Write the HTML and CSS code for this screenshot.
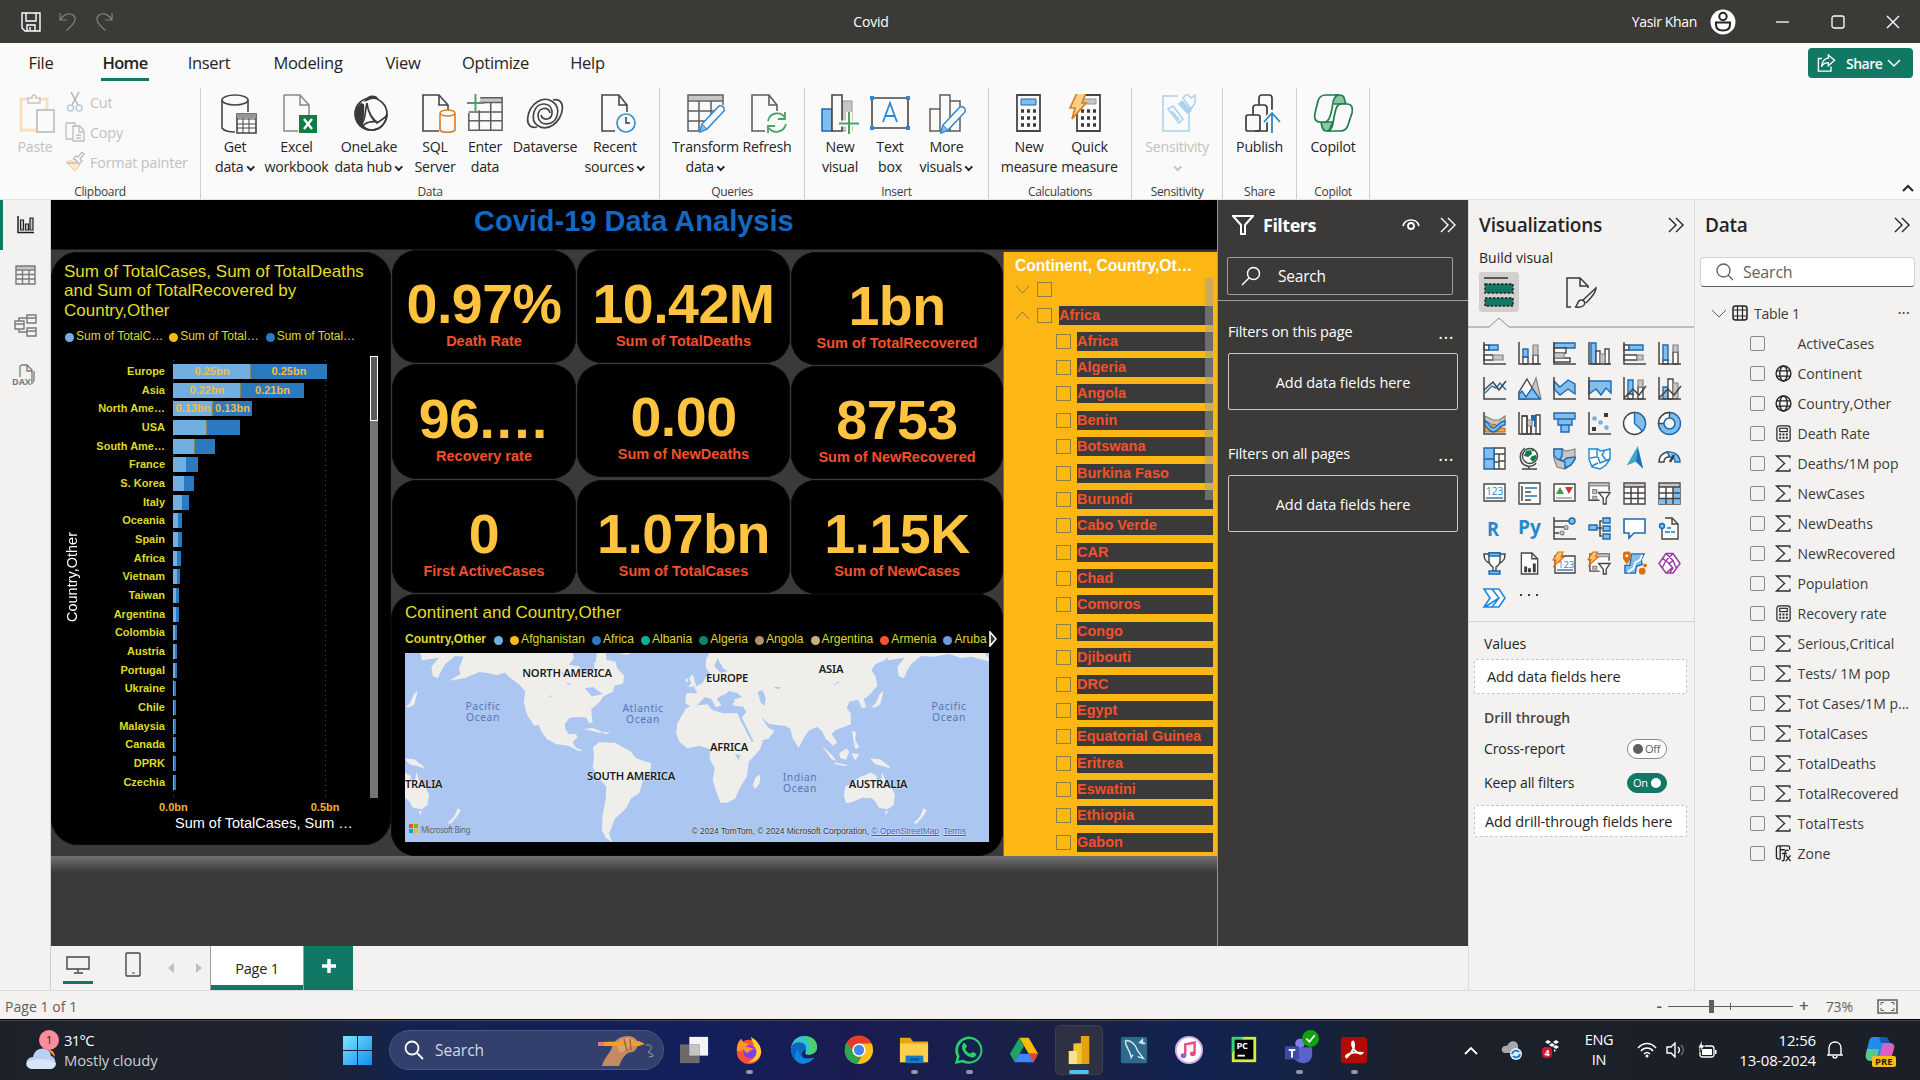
FILE: index.html
```html
<!DOCTYPE html>
<html lang="en">
<head>
<meta charset="utf-8">
<title>Covid</title>
<link rel="stylesheet" href="styles.css">
</head>
<body>
<svg class="defs" width="0" height="0">
  <symbol id="sigma" viewBox="0 0 16 16"><path d="M14 3V1H1.5L9 8 1.500 15H14V13" fill="none" stroke="#323130" stroke-width="1.3"/></symbol>
  <symbol id="globe" viewBox="0 0 16 16"><g fill="none" stroke="#252423" stroke-width="1.3"><circle cx="8" cy="8" r="7"/><ellipse cx="8" cy="8" rx="3.500" ry="7"/><path d="M1.500 5.500h13M1.500 10.500h13"/></g></symbol>
  <symbol id="calc" viewBox="0 0 16 18"><rect x="1" y="1" width="14" height="16" rx="2.500" fill="none" stroke="#252423" stroke-width="1.300"/><rect x="4" y="3.500" width="8" height="3.500" fill="none" stroke="#252423" stroke-width="1.200"/><path d="M3.500 10h2M7 10h2M10.500 10h2M3.500 13.500h2M7 13.500h2M10.500 13.500h2" stroke="#252423" stroke-width="2"/></symbol>
  <symbol id="chev2" viewBox="0 0 17 16"><path d="M1 1l7 7-7 7M8 1l7 7-7 7" fill="none" stroke="currentColor" stroke-width="1.400"/></symbol>
</svg>

<header class="titlebar">
  <div class="quick">
    <svg width="20" height="20" viewBox="0 0 20 20"><path d="M1 1h18v18H4l-3-3zM5 1v8h10V1M6 19v-6h8v6M9 15v3" fill="none" stroke="#fff" stroke-width="1.400"/></svg>
    <svg width="18" height="20" viewBox="0 0 18 20"><path d="M1 1v7h7M1.500 7.500C5 2 11 0 14.500 3.500 18 7 16 11 7.500 18.500" fill="none" stroke="#84827f" stroke-width="1.200"/></svg>
    <svg width="18" height="20" viewBox="0 0 18 20"><path d="M17 1v7h-7M16.500 7.500C13 2 7 0 3.500 3.500 0 7 2 11 10.500 18.500" fill="none" stroke="#84827f" stroke-width="1.200"/></svg>
  </div>
  <div class="doc-title">Covid</div>
  <div class="account"><span>Yasir Khan</span>
    <svg width="26" height="26" viewBox="0 0 26 26"><circle cx="13" cy="13" r="12.500" fill="#fff"/><circle cx="13" cy="7.500" r="3.700" fill="none" stroke="#252423" stroke-width="2"/><path d="M6 13.500h14v2c0 4-3 6-7 6s-7-2-7-6z" fill="none" stroke="#252423" stroke-width="2"/></svg>
    <svg width="14" height="14" viewBox="0 0 14 14"><path d="M0 7h13" stroke="#fff" stroke-width="1.300"/></svg>
    <svg width="14" height="14" viewBox="0 0 14 14"><rect x="1" y="1" width="12" height="12" rx="2" fill="none" stroke="#fff" stroke-width="1.300"/></svg>
    <svg width="14" height="14" viewBox="0 0 14 14"><path d="M1 1l12 12M13 1L1 13" stroke="#fff" stroke-width="1.400"/></svg>
  </div>
</header>

<nav class="tabs">
  <span class="t-file">File</span><span class="t-home active">Home</span><span class="t-insert">Insert</span><span class="t-model">Modeling</span><span class="t-view">View</span><span class="t-opt">Optimize</span><span class="t-help">Help</span>
  <button class="share"><svg width="20" height="20" viewBox="0 0 20 20"><path d="M5 5H1v14h14v-5M12 1l7 6-7 6v-3.500c-4 0-6 1.500-7.500 4.500C5 9 7 5 12 4.500z" fill="none" stroke="#fff" stroke-width="1.500"/></svg>Share<svg width="14" height="9" viewBox="0 0 14 9"><path d="M1 1l6 6 6-6" fill="none" stroke="#fff" stroke-width="1.500"/></svg></button>
</nav>

<section class="ribbon">
  <div class="group g-clip disabled">
    <div class="items">
      <div class="cmd w-paste i-in"><svg width="36" height="40" viewBox="0 0 36 40"><path d="M9 5H2v31h17V17h9V5h-7" fill="none" stroke="#f7dfbf" stroke-width="3"/><path d="M9 4h4c0-4 4-4 4 0h4v5H9z" fill="#fafafa" stroke="#c8c6c4" stroke-width="1.500"/><rect x="18" y="16" width="17" height="22" fill="#fafafa" stroke="#bdbbb9" stroke-width="1.600"/></svg><span>Paste</span></div>
      <div class="minor">
        <div><svg width="20" height="20" viewBox="0 0 20 20"><path d="M6 0l7 13M14 0L7 13" stroke="#b5b3b1" stroke-width="1.500"/><circle cx="5.500" cy="16" r="3" fill="none" stroke="#b3cfe2" stroke-width="1.500"/><circle cx="14" cy="16" r="3" fill="none" stroke="#b3cfe2" stroke-width="1.500"/></svg>Cut</div>
        <div><svg width="20" height="20" viewBox="0 0 20 20"><path d="M1 1h9v4M8 17H1V1M8 4h7l4 5v10H8zM14 4v6h5M11 13h5M11 16h5" fill="none" stroke="#c0bebc" stroke-width="1.300"/></svg>Copy</div>
        <div><svg width="20" height="20" viewBox="0 0 20 20"><path d="M1 10l8-3 6 6-5 6z" fill="#fbe9d2" stroke="#efcfa8"/><path d="M9 6l5 6 3-3-2-2 4-5-2-2-4 5-2-1zM12 11L2 11" fill="#fafafa" stroke="#c0bebc" stroke-width="1.300"/></svg>Format painter</div>
      </div>
    </div><div class="gname">Clipboard</div>
  </div>
  <div class="group g-data">
    <div class="items">
      <div class="cmd w60 i-far"><svg width="36" height="40" viewBox="0 0 36 40"><g fill="#fafafa" stroke="#484644" stroke-width="1.600"><path d="M1 6v28c2 3 7 4 13 4M27 6v12"/><ellipse cx="14" cy="6" rx="13" ry="5"/><path d="M16 20h19v19H16z"/><path d="M16 25h19M16 30h19M16 34h19M22 24v15M28 24v15" stroke-width="1"/></g><path d="M16 20h19v4H16z" fill="#979593"/></svg><span>Get<br>data<i class="dd"></i></span></div>
      <div class="cmd w63 i-far"><svg width="34" height="40" viewBox="0 0 34 40"><path d="M1 1h16l9 10v11M15 37H1V1M17 1v10h9" fill="none" stroke="#8a8886" stroke-width="1.500"/><rect x="16" y="21" width="18" height="18" fill="#107c41"/><path d="M21 25l8 10M29 25l-8 10" stroke="#fff" stroke-width="2.400"/></svg><span>Excel<br>workbook</span></div>
      <div class="cmd w82 i-in"><svg width="36" height="40" viewBox="0 0 36 40"><circle cx="18" cy="20" r="16" fill="#fafafa" stroke="#3b3a39" stroke-width="1.700"/><path d="M14 9c1 8 4 16 10 20 4-3 9-5 10-9-1 9-6 16-15 16-5 0-9-3-10-6 4-6 3-14 5-21zM14 11c2 9 5 14 11 18M24 28c-5-1-12 0-15 5" fill="none" stroke="#3b3a39" stroke-width="1.600"/><path d="M11 8c2-7 11-9 15-3-4-1-9 0-15 3zM8 9C0 14 0 28 9 34c1-5 3-16 2-24z" fill="#3b3a39"/></svg><span>OneLake<br>data hub<i class="dd"></i></span></div>
      <div class="cmd w50 i-far"><svg width="36" height="40" viewBox="0 0 36 40"><path d="M18 37H2V1h16l9 10v5M18 1v10h9" fill="none" stroke="#484644" stroke-width="1.600"/><path d="M19 20v16c2 3 13 3 15 0V20" fill="#fafafa" stroke="#d67f29" stroke-width="1.600"/><ellipse cx="26.500" cy="19" rx="7.500" ry="3" fill="#fafafa" stroke="#d67f29" stroke-width="1.600"/></svg><span>SQL<br>Server</span></div>
      <div class="cmd w50"><svg width="38" height="42" viewBox="0 0 38 42"><path d="M14 4h23v5H14z" fill="#c8c6c4"/><path d="M14 4h23v34H2V20M13 9h24M2 19h35M2 28h35M13 17v21M25 9v29" fill="none" stroke="#605e5c" stroke-width="1.600"/><path d="M9 0v18M0 9.500h18" stroke="#4ca064" stroke-width="2"/></svg><span>Enter<br>data</span></div>
      <div class="cmd w70"><svg width="38" height="40" viewBox="0 0 38 40"><g fill="none" stroke="#484644" stroke-width="1.700"><path d="M11 33C-3 36 0 15 11 8c10-7 24 1 20 14-3 10-18 11-19 0 0-9 11-10 12-3"/><path d="M27 6c14-3 11 18 0 25C17 38 4 31 8 18 11 8 24 7 26 17c1 10-10 10-11 4"/></g></svg><span>Dataverse</span></div>
      <div class="cmd w70 i-in"><svg width="38" height="40" viewBox="0 0 38 40"><path d="M17 37H4V1h17l8 10v7M21 1v10h8" fill="none" stroke="#484644" stroke-width="1.600"/><circle cx="28" cy="29" r="9" fill="#fafafa" stroke="#3b8fcb" stroke-width="1.700"/><path d="M28 23v6h4" fill="none" stroke="#3b3a39" stroke-width="1.500"/></svg><span>Recent<br>sources<i class="dd"></i></span></div>
    </div><div class="gname">Data</div>
  </div>
  <div class="group g-query">
    <div class="items">
      <div class="cmd w71"><svg width="38" height="40" viewBox="0 0 38 40"><path d="M1 1h35v5H1z" fill="#c8c6c4"/><path d="M12 37H1V1h35v10M1 7h35M1 17h26M1 27h18M12 7v30M24 7v14" fill="none" stroke="#605e5c" stroke-width="1.500"/><path d="M13 38l2-8 17-18c3-1 6 1 5 5L20 35z" fill="#fafafa" stroke="#2b88d8" stroke-width="1.500"/><path d="M13 38l2-8 5 5z" fill="#83bdeb" stroke="#2b88d8"/></svg><span>Transform<br>data<i class="dd"></i></span></div>
      <div class="cmd w52 i-in"><svg width="36" height="40" viewBox="0 0 36 40"><path d="M14 37H1V1h17l8 10v6M18 1v10h8" fill="none" stroke="#605e5c" stroke-width="1.600"/><path d="M17 27c2-9 13-10 17-3M34 18v7h-7M35 30c-2 9-13 10-17 4M17 39v-7h7" fill="none" stroke="#4ca064" stroke-width="1.800"/></svg><span>Refresh</span></div>
    </div><div class="gname">Queries</div>
  </div>
  <div class="group g-insert">
    <div class="items">
      <div class="cmd w50"><svg width="38" height="40" viewBox="0 0 38 40"><path d="M21 7h10v30H21z" fill="#c8c6c4" stroke="#979593"/><path d="M1 15h10v22H1z" fill="#83bdeb" stroke="#1b6ab3" stroke-width="1.500"/><path d="M11 1h10v36H11z" fill="#fafafa" stroke="#484644" stroke-width="1.600"/><path d="M28 18v22M18 29.500h20" stroke="#fafafa" stroke-width="6"/><path d="M28 18v22M18 29.500h20" stroke="#4ca064" stroke-width="2"/></svg><span>New<br>visual</span></div>
      <div class="cmd w50"><svg width="40" height="40" viewBox="0 0 40 40"><path d="M2 4h36v30H2z" fill="#fafafa" stroke="#484644" stroke-width="1.600"/><path d="M13 28l7-19 7 19M15.500 22h9" fill="none" stroke="#2b88d8" stroke-width="1.800"/><path d="M0 2h4v4H0zM36 2h4v4h-4zM0 32h4v4H0zM36 32h4v4h-4z" fill="#2b88d8"/></svg><span>Text<br>box</span></div>
      <div class="cmd w63 i-in"><svg width="38" height="40" viewBox="0 0 38 40"><path d="M1 15h10v22H1zM11 1h10v36H11zM21 7h10v30H21z" fill="#fafafa" stroke="#605e5c" stroke-width="1.500"/><path d="M12 39l2-8 17-18c3-1 6 1 5 5L19 36z" fill="#fafafa" stroke="#2b88d8" stroke-width="1.500"/><path d="M12 39l2-8 5 5z" fill="#83bdeb" stroke="#2b88d8"/></svg><span>More<br>visuals<i class="dd"></i></span></div>
    </div><div class="gname">Insert</div>
  </div>
  <div class="group g-calc">
    <div class="items">
      <div class="cmd w59"><svg width="26" height="40" viewBox="0 0 26 40"><path d="M1 1h23v36H1z" fill="#fafafa" stroke="#484644" stroke-width="1.800"/><path d="M5 5h15v6H5z" fill="#83bdeb" stroke="#1b6ab3"/><path d="M5 17h3M11 17h3M17 17h3M5 24h3M11 24h3M17 24h3M5 31h3M11 31h3M17 31h3" stroke="#3b3a39" stroke-width="3.500"/></svg><span>New<br>measure</span></div>
      <div class="cmd w61 i-back"><svg width="34" height="40" viewBox="0 0 34 40"><path d="M8 1h23v36H8z" fill="#fafafa" stroke="#484644" stroke-width="1.800"/><path d="M14 5h13v5H14z" fill="#c8c6c4" stroke="#979593"/><path d="M12 17h3M18 17h3M24 17h3M12 24h3M18 24h3M24 24h3M12 31h3M18 31h3M24 31h3" stroke="#3b3a39" stroke-width="3.500"/><path d="M8-1h9l-4 10h4L3 25l3-11H1z" fill="#fcd083" stroke="#d67f29" stroke-width="1.700"/></svg><span>Quick<br>measure</span></div>
    </div><div class="gname">Calculations</div>
  </div>
  <div class="group g-sens disabled">
    <div class="items"><div class="cmd w70 i-in"><svg width="36" height="40" viewBox="0 0 36 40"><path d="M17 2H2v35h26V18" fill="none" stroke="#a9d2ec" stroke-width="1.500"/><path d="M7 15l5-3 10 13-4 4zM11 17l7 9" fill="none" stroke="#a9d2ec" stroke-width="1.500"/><path d="M17 10l4-4 10 11-5 3z" fill="#a9d2ec"/><path d="M22 4l4-4 4 4 4-3v8l-4 6z" fill="#fafafa" stroke="#a9d2ec" stroke-width="1.500"/></svg><span>Sensitivity<br><i class="dd"></i></span></div></div>
    <div class="gname">Sensitivity</div>
  </div>
  <div class="group g-share">
    <div class="items"><div class="cmd w60 i-far"><svg width="36" height="40" viewBox="0 0 36 40"><g fill="none" stroke="#3b3a39" stroke-width="1.700"><rect x="1" y="21" width="14" height="16" rx="2"/><path d="M8 21v-7c0-2 1-3 3-3h8c2 0 3 1 3 3v23H10M14 11V4c0-2 1-3 3-3h7c2 0 3 1 3 3v14"/></g><path d="M27 39V20M20 27l7-8 7 8" fill="none" stroke="#fafafa" stroke-width="5"/><path d="M27 39V20M19 28l8-9 8 9" fill="none" stroke="#2f86c1" stroke-width="1.800"/></svg><span>Publish</span></div></div>
    <div class="gname">Share</div>
  </div>
  <div class="group g-copilot">
    <div class="items"><div class="cmd w60"><svg width="40" height="40" viewBox="0 0 40 40"><g stroke="#1d7d4c" stroke-width="1.700" stroke-linejoin="round"><path d="M22 1h5c5 0 4 5 6 9H21M8 28h12l-4 9h-3c-4 0-4-5-5-9" fill="#8cc4a3"/><path d="M13 1h12c-5 2-5 8-6 14-2 8-3 13-8 13H7c-5 0-6-4-5-9l3-12c1-4 4-6 8-6z" fill="#fafafa"/><path d="M27 37H15c5-2 5-8 6-14 2-8 2-13 8-13h5c5 0 6 4 5 9l-4 12c-1 4-4 6-8 6z" fill="#fafafa"/></g></svg><span>Copilot</span></div></div>
    <div class="gname">Copilot</div>
  </div>
  <svg class="collapse" width="12" height="8" viewBox="0 0 12 8"><path d="M1 7l5-5 5 5" fill="none" stroke="#252423" stroke-width="2"/></svg>
</section>

<main class="workspace">
  <aside class="views">
    <div class="view on"><svg width="17" height="18" viewBox="0 0 17 18"><path d="M1 0v16.500h16" fill="none" stroke="#201f1e" stroke-width="1.500"/><path d="M3.500 4h3v10h-3zM8.500 8h3v6h-3zM13 2h3v12h-3z" fill="#c8c6c4" stroke="#201f1e" stroke-width="1.200"/></svg></div>
    <div class="view"><svg width="21" height="20" viewBox="0 0 21 20"><path d="M1 1h19v3H1z" fill="#c8c6c4"/><path d="M1 1h19v18H1zM1 5h19M1 9.500h19M1 14h19M7.500 5v14M14 5v14" fill="none" stroke="#7b7977" stroke-width="1.400"/></svg></div>
    <div class="view"><svg width="23" height="23" viewBox="0 0 23 23"><path d="M13 1h9v8h-9zM13 14h9v8h-9zM1 7h9v8H1zM13 4h9M13 17h9M1 10h9M5 7V4h8M5 15v3h8" fill="none" stroke="#7b7977" stroke-width="1.400"/></svg></div>
    <div class="view dax"><svg width="22" height="22" viewBox="0 0 22 22"><path d="M6 13V3c0-1 1-2 2-2h5l5 5v10c0 1-1 2-2 2M13 1v6h5M20 7v8c0 3-2 5-4 5" fill="none" stroke="#7b7977" stroke-width="1.300"/></svg><b>DAX</b></div>
  </aside>

  <div class="center">
    <div class="stage">
      <div class="report">
        <h1>Covid-19 Data Analysis</h1>
        <div class="board">
          <section class="card chart">
            <h2>Sum of TotalCases, Sum of TotalDeaths<br>and Sum of TotalRecovered by<br>Country,Other</h2>
            <div class="legend"><i class="c1"></i><span>Sum of TotalC…</span><i class="c2"></i><span>Sum of Total…</span><i class="c3"></i><span>Sum of Total…</span></div>
            <div class="plot">
              <div class="ytitle">Country,Other</div>
              <div class="rows">
                <div class="row"><span>Europe</span><b style="width:78px">0.25bn</b><b style="width:76px">0.25bn</b></div>
                <div class="row"><span>Asia</span><b style="width:68px">0.22bn</b><b style="width:63px">0.21bn</b></div>
                <div class="row"><span>North Ame…</span><b style="width:40px">0.13bn</b><b style="width:39px">0.13bn</b></div>
                <div class="row"><span>USA</span><b style="width:34px"></b><b style="width:33px"></b></div>
                <div class="row"><span>South Ame…</span><b style="width:22px"></b><b style="width:20px"></b></div>
                <div class="row"><span>France</span><b style="width:13px"></b><b style="width:12px"></b></div>
                <div class="row"><span>S. Korea</span><b style="width:11px"></b><b style="width:10px"></b></div>
                <div class="row"><span>Italy</span><b style="width:9px"></b><b style="width:7px"></b></div>
                <div class="row"><span>Oceania</span><b style="width:5px"></b><b style="width:4px"></b></div>
                <div class="row"><span>Spain</span><b style="width:5px"></b><b style="width:4px"></b></div>
                <div class="row"><span>Africa</span><b style="width:4px"></b><b style="width:4px"></b></div>
                <div class="row"><span>Vietnam</span><b style="width:4px"></b><b style="width:3px"></b></div>
                <div class="row"><span>Taiwan</span><b style="width:3px"></b><b style="width:3px"></b></div>
                <div class="row"><span>Argentina</span><b style="width:3px"></b><b style="width:3px"></b></div>
                <div class="row"><span>Colombia</span><b style="width:2px"></b><b style="width:2px"></b></div>
                <div class="row"><span>Austria</span><b style="width:2px"></b><b style="width:2px"></b></div>
                <div class="row"><span>Portugal</span><b style="width:2px"></b><b style="width:2px"></b></div>
                <div class="row"><span>Ukraine</span><b style="width:1px"></b><b style="width:2px"></b></div>
                <div class="row"><span>Chile</span><b style="width:1px"></b><b style="width:2px"></b></div>
                <div class="row"><span>Malaysia</span><b style="width:1px"></b><b style="width:2px"></b></div>
                <div class="row"><span>Canada</span><b style="width:1px"></b><b style="width:2px"></b></div>
                <div class="row"><span>DPRK</span><b style="width:1px"></b><b style="width:2px"></b></div>
                <div class="row"><span>Czechia</span><b style="width:1px"></b><b style="width:2px"></b></div>
              </div>
              <div class="scroll"><i></i></div>
            </div>
            <div class="ticks"><span>0.0bn</span><span>0.5bn</span></div>
            <div class="xtitle">Sum of TotalCases, Sum …</div>
          </section>

          <div class="middle">
            <div class="kpis">
              <div class="kcol k1">
                <div class="card kpi"><strong>0.97%</strong><span>Death Rate</span></div>
                <div class="card kpi tall"><strong>96.…</strong><span>Recovery rate</span></div>
                <div class="card kpi"><strong>0</strong><span>First ActiveCases</span></div>
              </div>
              <div class="kcol k2">
                <div class="card kpi"><strong>10.42M</strong><span>Sum of TotalDeaths</span></div>
                <div class="card kpi mid"><strong>0.00</strong><span>Sum of NewDeaths</span></div>
                <div class="card kpi"><strong>1.07bn</strong><span>Sum of TotalCases</span></div>
              </div>
              <div class="kcol k3">
                <div class="card kpi"><strong>1bn</strong><span>Sum of TotalRecovered</span></div>
                <div class="card kpi"><strong>8753</strong><span>Sum of NewRecovered</span></div>
                <div class="card kpi"><strong>1.15K</strong><span>Sum of NewCases</span></div>
              </div>
            </div>
            <section class="card mapcard">
              <h2>Continent and Country,Other</h2>
              <div class="legend mlegend"><strong>Country,Other</strong><i class="c1"></i><i class="c2"></i><span>Afghanistan</span><i class="c3"></i><span>Africa</span><i class="c4"></i><span>Albania</span><i class="c5"></i><span>Algeria</span><i class="c6"></i><span>Angola</span><i class="c7"></i><span>Argentina</span><i class="c8"></i><span>Armenia</span><i class="c9"></i><span>Aruba</span><svg width="8" height="16" viewBox="0 0 8 16"><path d="M1 1v14l6-7z" fill="#333" stroke="#fff" stroke-width="1.600"/></svg></div>
              <div class="map">
                <svg width="584" height="189" viewBox="37 219 1454 567" preserveAspectRatio="none">
                  <g fill="#efeeea">
                    <g id="east">
                      <path d="M1290 219h190l17 26-30-8-20-7-25 4-30-12-40 8-30-2-25 25-10 20-8 22-13-7-3-28 17-25zM1235 219h60l-15 14-40 8z"/>
                      <path d="M1133 620l17-10 20-20 15-5 10-8 17 11-2 10 12 8 3-31 8 28 14 17 10 25-4 30-14 13-22-5-10-20-8-8-24-2-22 12-18 5-5-24z"/>
                      <path d="M1195 535l25 3 22 20 4 8-20-8-18-5zM1232 694l8-2-6 14z"/><path d="M1198 382l12-14 8-24 10-12-2 14-6 28-12 8zM1328 685l8 6-8 16-17 24-8-2 17-20z"/>
                    </g>
                    <use href="#east" x="-1160"/>
                    <path d="M185 222l25-3h285l-10 14-25-3-15 24 26 5 6 20 18 6 14-20-4-46h32l2 20 22 6 4 20 18 22-3 24-22 6-3 18-24 14-10 18-20 20 1 22 2 18-8 4-7-18-18-2-24 2-12 18 2 18 8 14 18-2 3 12-9 10-2 8 10 14 14 6-8 3-26-16-32-6-22-14-12-18-10-26-10 4-18-34-8-36 3-34-14-20-22-20-15-16-20 8-18-6-25-4-35 18-40 8 28-20-4-16z"/>
                    <path d="M480 447l24-3 26 12-10 2-26-8zM525 456l24 1-12 6zM572 219l18 6 8-6z"/>
                    <path d="M505 502l15-15 40 1 20 14 20 13 12 20 38 15-2 20-18 30-10 40-20 15-10 25-15 20-15 15-8 25-7 22 8 24-16-12-10-24 2-45 8-52 1-33-23-34-11-26 4-28z"/>
                    <path d="M737 385l13-7 40-5 12 17 28 10 35 0 8 24 17 36 10 25 28-2-8 27-27 35-5 45-18 35-10 30-20 13h-18l-14-48-5-20 5-35-13-30 2-27-27-10-30 7-20-20-8-25 3-30zM910 592l12-9-2 27-12 18-5-14z"/>
                    <path d="M735 370l2-30h28l-8-18 20-12 10-20 10-8-12-20 2-25 8-18h450l-12 20-25 14-10 18 10 16 5 30-20 28-14 12 6 24-10 4-10-26-22 6-6 18 10 18 0 32-38 18-10 10 14 26-10 10-18-20-10-24-12-12-20 10-14 25-12 28-15-30-6-28-12-8-40-6-20-20 18 32 15 8-15 24-35 12-15-32-20-38 15-22-8-16-28-4 8-14-16-14-14-4-16 12 12 20-14 6-12-26-16-4-14 18-14 16z"/>
                    <path d="M742 321l20-2-8-36-10 12 6 14zM733 300l8-5v13zM1075 498l26 28 10 18-12-6zM1106 547l30 7v5l-28-6zM1118 520l18-15 7 10-8 24-14-4zM1150 452l10 4-2 24 10 22-10 4-5-28zM1148 520l20 2-10 20z"/>
                  </g>
                  <g fill="#abc6f0"><path d="M832 345l12-12 20 6 12 12-24 8zM915 335l12-4 8 22-2 24-10-8zM485 325l20-4 25 22-28 6zM815 235l-8 24 16 20 18-6-12-8zM858 522l15 4-6 14zM865 400l8 6 26 64-8-4zM955 322l18-2-6 8zM1102 318l14-14 3 3zM425 272l14 18-9-3zM440 305l14 12-12-4zM455 219l60 0-4 30-24-2-30-14zM397 345l6 4-6 4z"/></g>
                </svg>
                <b class="pin p1">NORTH AMERICA</b><b class="pin p2">EUROPE</b><b class="pin p3">ASIA</b><b class="pin p4">AFRICA</b><b class="pin p5">SOUTH AMERICA</b><b class="pin p6">AUSTRALIA</b><b class="pin p7">TRALIA</b>
                <span class="pin o1">Pacific<br>Ocean</span><span class="pin o2">Atlantic<br>Ocean</span><span class="pin o3">Pacific<br>Ocean</span><span class="pin o4">Indian<br>Ocean</span>
                <span class="pin bing"><svg width="9" height="9" viewBox="0 0 9 9"><path d="M0 0h4v4H0z" fill="#f25022"/><path d="M5 0h4v4H5z" fill="#7fba00"/><path d="M0 5h4v4H0z" fill="#00a4ef"/><path d="M5 5h4v4H5z" fill="#ffb900"/></svg>Microsoft Bing</span>
                <span class="pin credit">© 2024 TomTom, © 2024 Microsoft Corporation, <u>© OpenStreetMap</u> <u>Terms</u></span>
              </div>
            </section>
          </div>

          <section class="slicer">
            <h3>Continent, Country,Ot…</h3>
            <div class="srow top"><svg width="15" height="9" viewBox="0 0 15 9"><path d="M1 1l6.500 7L14 1" fill="none" stroke="#8a7a45"/></svg><i></i></div>
            <div class="srow top second"><svg width="15" height="9" viewBox="0 0 15 9"><path d="M1 8l6.500-7L14 8" fill="none" stroke="#8a7a45"/></svg><i></i><span>Africa</span></div>
            <div class="kids">
              <div class="srow"><i></i><span>Africa</span></div>
              <div class="srow"><i></i><span>Algeria</span></div>
              <div class="srow"><i></i><span>Angola</span></div>
              <div class="srow"><i></i><span>Benin</span></div>
              <div class="srow"><i></i><span>Botswana</span></div>
              <div class="srow"><i></i><span>Burkina Faso</span></div>
              <div class="srow"><i></i><span>Burundi</span></div>
              <div class="srow"><i></i><span>Cabo Verde</span></div>
              <div class="srow"><i></i><span>CAR</span></div>
              <div class="srow"><i></i><span>Chad</span></div>
              <div class="srow"><i></i><span>Comoros</span></div>
              <div class="srow"><i></i><span>Congo</span></div>
              <div class="srow"><i></i><span>Djibouti</span></div>
              <div class="srow"><i></i><span>DRC</span></div>
              <div class="srow"><i></i><span>Egypt</span></div>
              <div class="srow"><i></i><span>Equatorial Guinea</span></div>
              <div class="srow"><i></i><span>Eritrea</span></div>
              <div class="srow"><i></i><span>Eswatini</span></div>
              <div class="srow"><i></i><span>Ethiopia</span></div>
              <div class="srow"><i></i><span>Gabon</span></div>
            </div>
            <div class="sthumb"></div>
          </section>
        </div>
        <div class="shade"></div>
      </div>

      <aside class="filters">
        <div class="fhead"><svg width="22" height="20" viewBox="0 0 22 20"><path d="M1 1h20l-8 9v9H9v-9z" fill="none" stroke="#fff" stroke-width="2"/></svg><b>Filters</b>
          <svg class="eye" width="18" height="14" viewBox="0 0 18 14"><path d="M1 8C3 0 15 0 17 8" fill="none" stroke="#fff" stroke-width="1.700"/><circle cx="9" cy="8" r="3" fill="none" stroke="#fff" stroke-width="1.800"/></svg>
          <svg width="17" height="16"><use href="#chev2"/></svg></div>
        <div class="fsearch"><svg width="20" height="20" viewBox="0 0 20 20"><circle cx="12.500" cy="7.500" r="6" fill="none" stroke="#fff" stroke-width="1.500"/><path d="M8 12l-7 7" stroke="#fff" stroke-width="1.500"/></svg>Search</div>
        <div class="fline"></div>
        <div class="fsec"><span>Filters on this page</span><em>...</em></div>
        <div class="fdrop">Add data fields here</div>
        <div class="fsec two"><span>Filters on all pages</span><em>...</em></div>
        <div class="fdrop">Add data fields here</div>
      </aside>
    </div>
    <div class="pagebar">
      <div class="device on"><svg width="24" height="18" viewBox="0 0 24 18"><path d="M1 1h22v12H1zM12 13v3M8 17h9" fill="none" stroke="#484644" stroke-width="1.400"/></svg></div>
      <div class="device phone"><svg width="16" height="25" viewBox="0 0 16 25"><rect x="1" y="1" width="14" height="23" rx="1" fill="none" stroke="#484644" stroke-width="1.400"/><path d="M7 21h3" stroke="#484644"/></svg></div>
      <svg class="arr" width="6" height="10" viewBox="0 0 6 10"><path d="M6 0v10L0 5z" fill="#c0bebc"/></svg>
      <svg class="arr" width="6" height="10" viewBox="0 0 6 10"><path d="M0 0v10l6-5z" fill="#c0bebc"/></svg>
      <div class="page">Page 1</div>
      <div class="plus"><svg width="14" height="14" viewBox="0 0 14 14"><path d="M7 0v14M0 7h14" stroke="#fff" stroke-width="3.500"/></svg></div>
    </div>
  </div>

  <aside class="panel viz">
    <div class="phead"><b>Visualizations</b><svg width="17" height="16"><use href="#chev2"/></svg></div>
    <div class="build">Build visual</div>
    <div class="modes">
      <div class="mode on"><svg width="30" height="30" viewBox="0 0 30 30"><path d="M0 1h24" stroke="#252423" stroke-width="1.400"/><path d="M1 7h28v9H1zM1 21h28v8H1z" fill="#117865" stroke="#252423" stroke-width="1.400" stroke-dasharray="2.500 1.500"/></svg></div>
      <div class="mode"><svg width="31" height="31" viewBox="0 0 31 31"><path d="M5 30H1V1h13l8 8v2M14 1v8h8" fill="none" stroke="#3b3a39" stroke-width="1.500"/><path d="M9 30c3-1 2-7 6-7 4 0 5 4 2 6s-5 1-8 1zM17 23L30 11c0 4-6 11-10 15" fill="none" stroke="#3b3a39" stroke-width="1.500"/></svg></div>
    </div>
    <svg class="notch" width="226" height="11" viewBox="0 0 226 11"><path d="M0 10h21l10-9 10 9h185" fill="none" stroke="#8a8886"/></svg>
    <div class="vgrid">
      <svg viewBox="0 0 23 23"><path class="w" d="M1 3h5v5H1zM1 13h9v5H1z"/><path class="b" d="M6 3h9v5H6z"/><path class="g" d="M10 13h10v5H10z"/><path class="a" d="M1 0v22h22"/></svg>
      <svg viewBox="0 0 23 23"><path class="w" d="M5 15h5v7H5zM15 13h5v9h-5z"/><path class="b" d="M5 7h5v8H5z"/><path class="g" d="M15 3h5v10h-5z"/><path class="a" d="M1 0v22h22"/></svg>
      <svg viewBox="0 0 23 23"><path class="b" d="M1 1h21v5H1z"/><path class="w" d="M1 6h12v5H1zM1 16h16v4H1z"/><path class="g" d="M1 11h10v5H1z"/><path class="a" d="M1 0v22h22"/></svg>
      <svg viewBox="0 0 23 23"><path class="b" d="M3 1h5v21H3z"/><path class="w" d="M8 9h4v13H8zM17 7h4v15h-4z"/><path class="g" d="M12 12h5v10h-5z"/><path class="a" d="M1 0v22h22"/></svg>
      <svg viewBox="0 0 23 23"><path class="w" d="M1 3h5v5H1zM1 13h13v5H1z"/><path class="b" d="M6 3h14v5H6z"/><path class="g" d="M14 13h6v5h-6z"/><path class="a" d="M1 0v22h22"/></svg>
      <svg viewBox="0 0 23 23"><path class="w" d="M5 18h5v4H5zM15 10h5v12h-5z"/><path class="b" d="M5 3h5v15H5z"/><path class="g" d="M15 3h5v7h-5z"/><path class="a" d="M1 0v22h22"/></svg>

      <svg viewBox="0 0 23 23"><path class="bl" d="M2 16l7-7 4 2 4-5 6 7"/><path class="a" d="M1 13l9-8 6 8 7-9"/><path class="a" d="M1 0v22h22"/></svg>
      <svg viewBox="0 0 23 23"><path class="g" d="M9 22l9-21 5 21z"/><path class="w" d="M1 15L9 2l8 14-8 6H1z"/><path class="b" d="M1 22v-5l3-3 4 6 6-9 8 11z"/></svg>
      <svg viewBox="0 0 23 23"><path class="b" d="M1 4l6 6 8-7 7 4v10l-7-5-8 6-6-6z"/><path class="a" d="M1 0v22h22"/></svg>
      <svg viewBox="0 0 23 23"><path class="b" d="M1 4h22v12l-5-5-5 7-5-6-7 5z"/><path class="a" d="M1 0v22h22"/></svg>
      <svg viewBox="0 0 23 23"><path class="b" d="M5 3h5v15H5z"/><path class="w" d="M5 17h5v5H5zM15 10h5v12h-5z"/><path class="g" d="M15 3h5v7h-5z"/><path class="a" d="M1 21l9-9 6 6 7-9M1 0v22h22"/></svg>
      <svg viewBox="0 0 23 23"><path class="b" d="M5 10h5v12H5z"/><path class="w" d="M10 2h5v20h-5z"/><path class="g" d="M15 6h5v16h-5z"/><path class="a" d="M1 21l9-9 6 6 7-9M1 0v22h22"/></svg>

      <svg viewBox="0 0 23 23"><path class="g" d="M2 4l8 4 6 0 6-4v6l-7 4-7-2-6-3z"/><path fill="#f2a33a" stroke="#c2610c" d="M2 14h6l4-2 4 4h6v4H2z"/><path class="b" d="M2 9c4 0 4 7 8 7s6-7 12-7v4c-6 0-6 7-12 7-4 0-5-5-8-6z"/><path class="a" d="M1 0v22h22"/></svg>
      <svg viewBox="0 0 23 23"><path class="w" d="M4 4h5v18H4zM9 10h4v12H9zM18 3h4v19h-4z"/><path fill="#1b6ab3" d="M13 3h5v12h-2V9h-3z"/><path class="g" d="M9 8h5v6H9z"/><path class="a" d="M1 0v22h22M4 4h5v18M13 14v8"/></svg>
      <svg viewBox="0 0 23 23"><path class="b" d="M1 1h21v6H1zM5 7h14v6H5zM8 13h8v7H8z"/></svg>
      <svg viewBox="0 0 23 23"><path fill="#83bdeb" stroke="#5fa5dc" d="M5 5h3v3H5zM11 9h3v3h-3zM17 14h3v3h-3z"/><path fill="#3b3a39" d="M16 1h4v4h-4zM4 15h4v4H4z"/><path class="a" d="M1 0v22h22"/></svg>
      <svg viewBox="0 0 23 23"><circle class="w" cx="11.500" cy="11.500" r="11"/><path class="b" d="M11.500.5a11 11 0 0 1 8 18.500l-8-7.500z"/></svg>
      <svg viewBox="0 0 23 23"><circle class="b" cx="11.500" cy="11.500" r="11"/><path class="w" d="M11.500.500A11 11 0 0 0 .500 11.500H6l5.500-6z"/><circle cx="11.500" cy="11.500" r="5.500" fill="#f3f2f1" stroke="#1b6ab3" stroke-width="1.500"/></svg>

      <svg viewBox="0 0 23 23"><path class="w" d="M11 1h11v21H11zM11 7h11M16 7v15M16 14h6M11 15h5"/><path class="b" d="M1 1h10v21H1zM1 12h10"/></svg>
      <svg viewBox="0 0 23 23"><path class="a" d="M7 1C0 6 1 17 9 19c4 1 8-1 9-3M11 19v3M4 22h15"/><circle class="w" cx="12" cy="9" r="7.500"/><path fill="#107c41" d="M8 4l5-1 1 4-4 3-4-1zM14 9l4-1 1 3-4 4-3-3zM12 1l4 2-1 2z"/></svg>
      <svg viewBox="0 0 23 23"><path class="g" d="M1 2h9l2 2 6-1 4-1v10l-4 6-6 4-8-2-3-8z"/><path class="b" d="M1 2h8v7l-2 3 3 2 4-3 8-1v2l-4 6-6 3 0-6-8-3-3-3z"/></svg>
      <svg viewBox="0 0 23 23"><path fill="#fff" stroke="#1b88d8" stroke-width="1.400" d="M1 2h9l2 2 6-1 4-1v10l-4 6-6 4-8-2-3-8zM9 2v8l-7 1M10 10l2 6 10-4M4 19l6-3M17 3l-3 5 4 5"/></svg>
      <svg viewBox="0 0 23 25"><path d="M15-1L3 20l10-4z" fill="#41a5c9"/><path d="M15-1l6 25-8-8z" fill="#1673b8"/></svg>
      <svg viewBox="0 0 23 23"><path class="w" d="M1 15C1 9 5 5 11 5v5c-3 0-5 2-5 5z"/><path class="b" d="M9 5c8-1 13 4 13 10h-5c0-3-2-5-5-5z"/><path d="M12 15l4-7" stroke="#3b3a39" stroke-width="2.500"/></svg>

      <svg viewBox="0 0 23 23"><path class="w" d="M1 2h21v17H1z"/><text x="3" y="13" font-size="10" fill="#2b88d8" font-family="Open Sans">123</text><path class="bl" d="M3 16h17"/></svg>
      <svg viewBox="0 0 23 23"><path class="w" d="M1 1h21v21H1z"/><path class="bl" stroke-width="2" d="M7 6h12M7 14h12"/><path class="a" d="M4 4v15M7 10h6M7 18h6"/></svg>
      <svg viewBox="0 0 23 23"><path class="w" d="M1 2h21v17H1z"/><path fill="#3f9b50" d="M3 12l4-7 4 7z"/><path fill="#d13438" d="M12 5h8l-4 7z"/><path class="a" d="M3 16h16" opacity=".5"/></svg>
      <svg viewBox="0 0 24 24"><path class="w" d="M22 9V1H1v18h11"/><path class="g" d="M1 1h21v3H1zM5 8h4v4H5zM5 15h4v3H5z"/><path class="w" d="M11 11h12l-4 6v6h-3v-6z"/></svg>
      <svg viewBox="0 0 23 23"><path class="w" d="M1 1h21v21H1z"/><path fill="#c8c6c4" d="M2 2h19v3H2z"/><path class="a" stroke-width="1" d="M1 5h21M1 11h21M1 16.500h21M8 5v17M15 5v17"/></svg>
      <svg viewBox="0 0 23 23"><path class="w" d="M1 1h21v21H1z"/><path fill="#c8c6c4" d="M2 2h19v3H2z"/><path fill="#83bdeb" d="M15 5h7v17H1v-6h14z"/><path class="a" stroke-width="1" d="M1 5h21M1 11h21M1 16.500h21M8 5v17M15 5v17"/></svg>

      <svg viewBox="0 0 23 23"><text x="4" y="19" font-size="20" font-weight="700" fill="#2b88c8" font-family="Open Sans" textLength="12" lengthAdjust="spacingAndGlyphs">R</text></svg>
      <svg viewBox="0 0 23 23"><text x="0" y="17" font-size="20" font-weight="700" fill="#2b88c8" font-family="Open Sans" textLength="23" lengthAdjust="spacingAndGlyphs">Py</text></svg>
      <svg viewBox="0 0 23 23"><path class="a" d="M1 0v22h22M1 4h15M1 10h10M1 16h5"/><circle class="b" cx="19" cy="4" r="3"/><circle class="g" cx="13" cy="10.500" r="2"/><circle class="g" cx="9" cy="16" r="2"/></svg>
      <svg viewBox="0 0 23 23"><path class="a" d="M8 11h6M14 4h-2v15h2"/><path class="b" d="M1 8h8v5H1zM15 1h7v5h-7zM15 9h7v5h-7zM15 17h7v5h-7z"/></svg>
      <svg viewBox="0 0 23 23"><path fill="#fff" stroke="#1b6ab3" stroke-width="1.600" d="M1 2h21v14H11l-5 5v-5H1z"/></svg>
      <svg viewBox="0 0 23 23"><path class="w" d="M4 12v10h16V7l-6-6H7M14 1v6h6"/><circle class="b" cx="4" cy="9" r="2.500"/><path class="bl" d="M9 11h4M7 15h5M13 15h4"/></svg>

      <svg viewBox="0 0 23 23"><path class="a" d="M6 2H1c0 6 2 8 6 9M17 2h5c0 6-2 8-6 9"/><path class="w" d="M6 1h11v8c0 4-3 5-4 6v4h-3v-4c-1-1-4-2-4-6z"/><path class="b" d="M6 1h11v3H6zM6 19h11v3H6z"/></svg>
      <svg viewBox="0 0 23 24"><path class="w" d="M3 1h11l6 6v16H3zM14 1v6h6"/><path fill="#3b3a39" d="M6 15h3v6H6zM10 17h3v4h-3zM15 12h3v9h-3z"/></svg>
      <svg viewBox="0 0 23 23"><path class="w" d="M2 4h20v17H2z"/><text x="5" y="16" font-size="9.500" fill="#2b88d8" font-family="Open Sans">123</text><path class="bl" d="M4 18h16"/><path class="z" d="M5 0h5L8 5h3L1 14l2-6H0z"/></svg>
      <svg viewBox="0 0 24 24"><path class="w" d="M22 9V2H2v18h10"/><path class="g" d="M2 2h20v3H2zM5 15h4v3H5z"/><path class="w" d="M11 12h12l-4 6v5h-3v-5z"/><path class="z" d="M5 0h5L8 5h3L1 14l2-6H0z"/></svg>
      <svg viewBox="0 0 24 24"><path class="b" d="M9 2h13l-3 6 1 5-6 2-1 7H2v-8h5z"/><path d="M20 3l-2 5-5 3-2 6-6 4" stroke="#fff" stroke-width="2" fill="none"/><path fill="#d9700f" d="M0 1c2-2 7-2 8 0v6l-4 6-4-6z"/><circle cx="20" cy="20" r="3.500" fill="#d9700f"/><circle cx="23" cy="14" r="2" fill="#d9700f"/><circle cx="4" cy="4" r="1.500" fill="#fff"/></svg>
      <svg viewBox="0 0 23 23"><path fill="#fff" stroke="#9b3fa5" stroke-width="1.500" stroke-linejoin="round" d="M8 1.500h7l7 10-7 9.500H8l-7-9.500zM8 1.500l7 7-3.500 3L4.500 6.500M15 1.500l-7 7L15 16l-3.500 5M8 8.500L4 16.500M15 8.500l3.500 8M8 21l7-6"/></svg>

      <svg viewBox="0 0 23 21"><path fill="#fff" stroke="#1b88e8" stroke-width="1.600" d="M1 1h15l6 9-6 9H1l6-9zM9 1l7 9-14 9M16 10l-7 9"/></svg>
      <svg viewBox="0 0 23 23"><path d="M2 8h2M10 8h2M18 8h2" stroke="#3b3a39" stroke-width="2"/></svg>
    </div>
    <div class="values">
      <span>Values</span>
      <div class="well">Add data fields here</div>
      <b>Drill through</b>
      <div class="opt"><span>Cross-report</span><em class="toggle"><i></i>Off</em></div>
      <div class="opt"><span>Keep all filters</span><em class="toggle yes">On<i></i></em></div>
      <div class="well drill">Add drill-through fields here</div>
    </div>
  </aside>

  <aside class="panel data">
    <div class="phead"><b>Data</b><svg width="17" height="16"><use href="#chev2"/></svg></div>
    <div class="dsearch"><svg width="18" height="18" viewBox="0 0 18 18"><circle cx="7.500" cy="7.500" r="6.500" fill="none" stroke="#605e5c" stroke-width="1.300"/><path d="M12 12l5 5" stroke="#605e5c" stroke-width="1.300"/></svg>Search</div>
    <div class="table"><svg width="14" height="9" viewBox="0 0 14 9"><path d="M0 1l7 7 7-7" fill="none" stroke="#605e5c"/></svg><svg width="16" height="16" viewBox="0 0 16 16"><rect x="1" y="1" width="14" height="14" rx="2.500" fill="none" stroke="#252423" stroke-width="1.500"/><path d="M1 5h14M1 11h14M5.500 1v14M10.500 1v14" stroke="#252423" stroke-width="1.200"/></svg><span>Table 1</span><em>···</em></div>
    <div class="fields">
      <div><i></i><svg></svg>ActiveCases</div>
      <div><i></i><svg><use href="#globe"/></svg>Continent</div>
      <div><i></i><svg><use href="#globe"/></svg>Country,Other</div>
      <div><i></i><svg><use href="#calc"/></svg>Death Rate</div>
      <div><i></i><svg><use href="#sigma"/></svg>Deaths/1M pop</div>
      <div><i></i><svg><use href="#sigma"/></svg>NewCases</div>
      <div><i></i><svg><use href="#sigma"/></svg>NewDeaths</div>
      <div><i></i><svg><use href="#sigma"/></svg>NewRecovered</div>
      <div><i></i><svg><use href="#sigma"/></svg>Population</div>
      <div><i></i><svg><use href="#calc"/></svg>Recovery rate</div>
      <div><i></i><svg><use href="#sigma"/></svg>Serious,Critical</div>
      <div><i></i><svg><use href="#sigma"/></svg>Tests/ 1M pop</div>
      <div><i></i><svg><use href="#sigma"/></svg>Tot Cases/1M p...</div>
      <div><i></i><svg><use href="#sigma"/></svg>TotalCases</div>
      <div><i></i><svg><use href="#sigma"/></svg>TotalDeaths</div>
      <div><i></i><svg><use href="#sigma"/></svg>TotalRecovered</div>
      <div><i></i><svg><use href="#sigma"/></svg>TotalTests</div>
      <div><i></i><svg viewBox="0 0 17 18"><path d="M5 15H3c-1 0-2-1-2-2V3c0-1 1-2 2-2h10c1 0 2 1 2 2v2M5 1v14M5 5h5M14 6c-5-3-4 5-5 10 0 1-2 1-2 0M7 9h5M11 11l5 6M16 11l-5 6" fill="none" stroke="#252423" stroke-width="1.400"/></svg>Zone</div>
    </div>
  </aside>
</main>

<footer class="status">
  <span>Page 1 of 1</span>
  <div class="zoom"><b>-</b><div class="slider"><i></i><u></u></div><b>+</b><span>73%</span><svg width="21" height="15" viewBox="0 0 21 15"><path d="M1 1h19v13H1z" fill="none" stroke="#605e5c" stroke-width="1.500"/><path d="M4 6V3.500h3M14 3.500h3V6M17 9v2.500h-3M7 11.500H4V9" fill="none" stroke="#605e5c"/></svg></div>
</footer>

<div class="taskbar">
  <div class="weather"><svg width="34" height="42" viewBox="0 0 34 42"><path d="M22 20a8 8 0 0 1 8 8z" fill="#f39a2b"/><path d="M7 40c-8-1-7-12 1-12 2-11 17-11 18-1 6 1 6 12-1 13z" fill="#b9d0f2"/><path d="M7 40c-8-1-7-9 1-9 8-2 16-1 23 3 0 4-3 6-6 6z" fill="#d9e6fa"/><circle cx="24" cy="11" r="10" fill="#f98d9a"/></svg><em>1</em><div><b>31°C</b><br>Mostly cloudy</div></div>
  <svg class="win" width="29" height="29" viewBox="0 0 29 29"><defs><linearGradient id="wg" x2="1" y2="1"><stop stop-color="#7fe4fb"/><stop offset="1" stop-color="#0f8df0"/></linearGradient></defs><path d="M0 0h14v14H0zM15 0h14v14H15zM0 15h14v14H0zM15 15h14v14H15z" fill="url(#wg)"/></svg>
  <div class="tsearch"><svg width="20" height="20" viewBox="0 0 20 20"><circle cx="8" cy="8" r="6.500" fill="none" stroke="#fff" stroke-width="1.800"/><path d="M13 13l6 6" stroke="#fff" stroke-width="1.800"/></svg><span>Search</span>
    <svg class="hand" width="58" height="32" viewBox="0 0 58 32"><path d="M4 32c2-9 8-12 10-19C17 2 32-1 38 5c4 5 1 10-3 13-6 0-10 4-14 14z" fill="#c68a63"/><path d="M18 10c4-7 15-8 19-3l-8 8-7 4z" fill="#dba37b"/><path d="M0 8l41-1 6 3-6 2L0 12z" fill="#f0a029"/><path d="M0 8l6 0v4H0z" fill="#e8718c"/><path d="M26 5l3 12M32 5l1 11" stroke="#9c6544" stroke-width="1.500"/><path d="M48 11c6-1 7 3 3 6-3 3 4 1 4 5l-4 1" fill="none" stroke="#98a0bb"/></svg></div>
  <div class="apps">
    <div class="app"><svg viewBox="0 0 32 32"><path d="M11 2h20v20H11z" fill="#f4f4f4"/><path d="M1 10h21v20H1z" fill="#6b6b6b"/><path d="M11 10h11v12H11z" fill="#c5c5c5"/></svg></div>
    <div class="app run"><svg viewBox="0 0 32 32"><circle cx="16" cy="18" r="13" fill="#ff4f35"/><path d="M18 2c6 3 11 9 11 17-2 7-7 11-14 10 10-4 10-12 6-17 0-3-2-6-3-10z" fill="#ffcf33"/><path d="M3 17C3 10 5 6 8 4c1 4 4 5 8 5l-8 8z" fill="#ff9728"/><circle cx="17" cy="18" r="7" fill="#7b3ff2"/><path d="M9 14c5-3 9 0 13 1-6 1-5 4-9 4z" fill="#ff9728"/></svg></div>
    <div class="app"><svg viewBox="0 0 32 32"><path d="M2 16C2 7 8 1 16 1s14 5 14 12c0 5-4 8-10 8-3 0-3-2-2-4 0-4-4-6-8-6-5 0-8 3-8 7" fill="#39c5c8"/><path d="M2 16c0-6 5-9 10-8 5 0 7 4 6 8-6 1-6 8 3 12l-5 3C8 31 2 24 2 16z" fill="#0c66c4"/><path d="M11 15c-2 7 3 12 16 9-4 7-16 9-20 2-2-4 0-9 4-11z" fill="#1184dd"/><path d="M16 1c12 0 17 10 12 17-2 2-5 3-8 3 5-9 1-15-4-20z" fill="#4bd06d"/></svg></div>
    <div class="app"><svg viewBox="0 0 32 32"><circle cx="16" cy="16" r="15" fill="#fbc116"/><path d="M3 8a15 15 0 0 1 26.500 1H16a7 7 0 0 0-7 9z" fill="#e33b2e"/><path d="M3 8l7 11a7 7 0 0 0 9 4l-5 8C1 29-2 17 3 8z" fill="#2da44f"/><circle cx="16" cy="16" r="7" fill="#fff"/><circle cx="16" cy="16" r="5.500" fill="#4285f4"/></svg></div>
    <div class="app run"><svg viewBox="0 0 32 32"><path d="M1 3h11l3 4h16v22H1z" fill="#e9a50f"/><path d="M1 9h30v20H1z" fill="#fdd04b"/><path d="M7 22h19v8H7z" fill="#1877c9"/><path d="M12 25h9v2h-9z" fill="#0b4c8c"/></svg></div>
    <div class="app run"><svg viewBox="0 0 32 32"><path d="M1 31l2-8a14.500 14.500 0 1 1 6 6z" fill="#25d366"/><path d="M4.500 27.500L6 22.500a12 12 0 1 1 4 4z" fill="#15224f"/><path d="M11 8l3 4-2 3c1 3 3 4 5 5l3-2 4 2c-1 5-6 5-11 1S7 11 11 8z" fill="#25d366"/></svg></div>
    <div class="app"><svg viewBox="0 0 32 32"><path d="M11 3h10l10 17H21z" fill="#fbbc04"/><path d="M11 3l5 9L6 29 1 20z" fill="#1ea362"/><path d="M6 29l5-9h20l-5 9z" fill="#4285f4"/><path d="M31 20H21l5 9z" fill="#ea4335"/></svg></div>
    <div class="app sel"><svg viewBox="0 0 32 32"><path d="M18 1h9v30H14V9h4z" fill="#e3a210"/><path d="M10 9h9v22h-9z" fill="#f1c232"/><path d="M5 17h9v14H5z" fill="#fbe28a"/></svg></div>
    <div class="app"><svg viewBox="0 0 32 32"><rect x="2" y="2" width="28" height="28" rx="2" fill="#2e6a8e"/><path d="M7 6c6-1 11 5 13 11l6 8-6-2M7 6c-1 7 5 9 6 18l2-3M22 8l3-3v4h3z" fill="none" stroke="#d4e7f2" stroke-width="1.500"/></svg></div>
    <div class="app"><svg viewBox="0 0 32 32"><circle cx="16" cy="16" r="14" fill="#fff" stroke="#d8a7ea" stroke-width="2"/><path d="M12 22V10l10-2v12" fill="none" stroke="#ef4581" stroke-width="2.500"/><ellipse cx="10" cy="22" rx="3" ry="2.500" fill="#8e5ff0"/><ellipse cx="20" cy="20" rx="3" ry="2.500" fill="#ef4581"/></svg></div>
    <div class="app"><svg viewBox="0 0 32 32"><path d="M3 2h26v27H3z" fill="#ccf03c"/><path d="M3 2h13L3 20z" fill="#35d481"/><path d="M6 5h20v21H6z" fill="#000"/><text x="8" y="15" font-family="Open Sans" font-weight="700" font-size="10" fill="#fff">PC</text><path d="M9 22h8" stroke="#fff" stroke-width="2"/></svg></div>
    <div class="app run"><svg viewBox="0 0 32 32"><circle cx="17" cy="9" r="5" fill="#7b83eb"/><path d="M10 13h20v8c0 5-4 9-9 9s-11-3-11-9z" fill="#5b62c9"/><path d="M1 12h15v14H1z" fill="#4048a5"/><path d="M5 16h7M8.500 16v8" stroke="#fff" stroke-width="2"/></svg><u class="ok"><svg viewBox="0 0 16 16"><path d="M4 8l3 3 5-6" fill="none" stroke="#fff" stroke-width="1.600"/></svg></u></div>
    <div class="app run"><svg viewBox="0 0 32 32"><rect x="2" y="2" width="28" height="28" rx="4" fill="#b30b00"/><path d="M15 7c3 4 0 11-7 17-3-2 6-7 17-5-3 4-12-4-11-11z" fill="none" stroke="#fff" stroke-width="2"/></svg></div>
  </div>
  <div class="tray">
    <svg class="up" width="14" height="9" viewBox="0 0 14 9"><path d="M1 8l6-6 6 6" fill="none" stroke="#fff" stroke-width="1.800"/></svg>
    <svg class="cloud" width="22" height="20" viewBox="0 0 22 20"><path d="M3 13c-5-3-1-8 3-7 3-8 12-5 11 1v6z" fill="#a8a8ac"/><circle cx="15" cy="14" r="6" fill="#d8eefb"/><path d="M11 14a4 4 0 0 1 7-2M19 14a4 4 0 0 1-7 2" fill="none" stroke="#1672c4" stroke-width="1.800"/></svg>
    <svg class="drop" width="20" height="20" viewBox="0 0 20 20"><path d="M7 0l3 2-3 2-3-2zM15 0l3 2-3 2-3-2zM15 5l3 2-3 2-3-2zM11 3l3 2-3 2-3-2zM13 9l2 1.500-2 1.500z" fill="#fff"/><rect x="1" y="7" width="10" height="11" rx="4" fill="#d5143a"/><text x="3.500" y="16" font-size="9" font-weight="700" fill="#fff" font-family="Open Sans">4</text></svg>
    <div class="lang">ENG<br>IN</div>
    <svg class="wifi" width="20" height="16" viewBox="0 0 20 16"><path d="M1 6c5-6 13-6 18 0M4 9c3-4 9-4 12 0M7 12c2-2 4-2 6 0" fill="none" stroke="#fff" stroke-width="1.500"/><circle cx="10" cy="14" r="1.500" fill="#fff"/></svg>
    <svg class="vol" width="20" height="16" viewBox="0 0 20 16"><path d="M1 5h4l4-4v14l-4-4H1zM12 5c2 2 2 4 0 6" fill="none" stroke="#fff" stroke-width="1.400"/><path d="M15 3c3 3 3 7 0 10" fill="none" stroke="#777" stroke-width="1.400"/></svg>
    <svg class="bat" width="20" height="18" viewBox="0 0 20 18"><rect x="3" y="5" width="14" height="11" rx="2.500" fill="none" stroke="#fff" stroke-width="1.300"/><path d="M5 8h10v6H5zM18 9h1.500v4H18z" fill="#fff"/><path d="M5-1L1 7h3l-1 4 5-7H5z" fill="#fff" stroke="#1b2027" stroke-width=".7"/></svg>
    <div class="clock">12:56<br>13-08-2024</div>
    <svg class="bell" width="16" height="18" viewBox="0 0 16 18"><path d="M2 13V7c0-8 12-8 12 0v6l1 1H1zM6 15c0 2.500 4 2.500 4 0" fill="none" stroke="#fff" stroke-width="1.400"/></svg>
    <div class="cp"><svg width="30" height="28" viewBox="0 0 30 28"><path d="M8 1h12l-6 24H6c-4 0-6-3-5-7L4 5c1-3 2-4 4-4z" fill="#1f8df0"/><path d="M2 13l12 0-3 12H6c-4 0-6-3-5-7z" fill="#58c88b"/><path d="M14 1h6c3 0 4 3 5 6h-9z" fill="#1557b8"/><path d="M18 7h7c4 0 5 3 4 6l-3 10c-1 3-3 5-6 5h-8z" fill="#d860c2"/></svg><b>PRE</b></div>
  </div>
</div>
</body>
</html>
```
FILE: styles.css
```css
* { box-sizing: border-box; }
body { margin: 0; width: 1920px; height: 1080px; overflow: hidden; font-family: "Open Sans", "Noto Sans", sans-serif; font-size: 14px; letter-spacing: -0.2px; color: #252423; background: #f3f2f1; display: flex; flex-direction: column; }
svg { display: block; flex: none; }
h1, h2, h3 { margin: 0; }
i, em { font-style: normal; }
.defs { display: none; }

/* title bar */
.titlebar { height: 43px; flex: none; background: #3b3a37; color: #fff; display: flex; align-items: center; }
.quick { display: flex; gap: 18px; padding-left: 21px; width: 840px; }
.doc-title { width: 62px; text-align: center; }
.account { margin-left: auto; display: flex; align-items: center; padding-right: 20px; }
.account span { margin-right: 13px; letter-spacing: -0.35px; }
.account svg:nth-of-type(1) { margin-right: 40px; }
.account svg:nth-of-type(2) { margin-right: 41px; }
.account svg:nth-of-type(3) { margin-right: 41px; }

/* ribbon */
.tabs { height: 41px; flex: none; background: #fafafa; display: flex; align-items: flex-start; font-size: 16.5px; letter-spacing: -0.3px; }
.tabs span { line-height: 39px; height: 38px; text-align: center; white-space: nowrap; flex: none; }
.t-file { width: 26px; margin-left: 28px; }
.t-home { width: 48px; margin-left: 47px; }
.t-insert { width: 44px; margin-left: 38px; }
.t-model { width: 74px; margin-left: 40px; }
.t-view { width: 38px; margin-left: 39px; }
.t-opt { width: 71px; margin-left: 38px; }
.t-help { width: 37px; margin-left: 38px; }
.tabs .active { font-weight: 600; letter-spacing: -0.7px; border-bottom: 3px solid #117865; }
.share { margin: 5px 7px 0 auto; width: 105px; height: 30px; border: 0; border-radius: 4px; background: #117865; color: #fff; font: 600 14px "Open Sans", sans-serif; letter-spacing: -0.5px; display: flex; align-items: center; gap: 5px; padding: 0 9px; }
.share svg:first-child { margin-right: 5px; width: 19px; height: 18px; }
.ribbon { height: 116px; flex: none; background: #fafafa; display: flex; position: relative; border-bottom: 1px solid #e8e6e4; }
.group { height: 111px; margin-top: 4px; border-right: 1px solid #d2d0ce; display: flex; flex-direction: column; }
.items { flex: 1; display: flex; padding-top: 6px; }
.gname { height: 16px; line-height: 17px; text-align: center; font-size: 12px; letter-spacing: -0.3px; color: #3b3a39; }
.g-clip { width: 201px; } .g-data { width: 459px; } .g-query { width: 145px; } .g-insert { width: 184px; }
.g-calc { width: 143px; } .g-sens { width: 91px; } .g-share { width: 74px; } .g-copilot { width: 73px; }
.g-data .items { padding-left: 4px; } .g-query .items { padding-left: 10px; } .g-insert .items { padding-left: 10px; } .g-calc .items { padding-left: 10px; }
.g-sens .items, .g-share .items, .g-copilot .items { justify-content: center; }
.cmd { flex: none; display: flex; flex-direction: column; align-items: center; gap: 3px; text-align: center; line-height: 20px; font-size: 14.2px; letter-spacing: -0.25px; white-space: nowrap; }
.cmd svg { height: 40px; }
.i-in svg { margin-left: 3px; }
.i-far svg { margin-left: 7px; }
.i-back svg { margin-right: 7px; }
.w-paste { width: 50px; margin-left: 10px; }
.w50 { width: 50px; } .w52 { width: 52px; } .w59 { width: 60px; } .w60 { width: 60px; } .w61 { width: 61px; } .w63 { width: 63px; } .w70 { width: 70px; } .w71 { width: 71px; } .w82 { width: 82px; }
.dd { display: inline-block; width: 5.500px; height: 5.500px; border: solid #252423; border-width: 0 2px 2px 0; transform: rotate(45deg); margin: 0 2px 3px 4px; }
.disabled, .disabled .cmd { color: #c3c1bf; }
.disabled .dd { border-color: #c3c1bf; }
.minor { display: flex; flex-direction: column; gap: 10px; padding-left: 5px; font-size: 14.4px; margin-top: -2px; }
.minor div { display: flex; align-items: center; gap: 5px; height: 20px; white-space: nowrap; }
.collapse { position: absolute; right: 6px; bottom: 7px; }

/* workspace */
.workspace { height: 790px; flex: none; display: flex; }
.views { width: 51px; border-right: 1px solid #d2d0ce; display: flex; flex-direction: column; }
.view { height: 50px; display: flex; align-items: center; justify-content: center; position: relative; }
.view.on { border-left: 3px solid #117865; padding-right: 3px; }
.dax b { position: absolute; left: 12px; bottom: 14px; font-size: 9px; line-height: 9px; background: #f3f2f1; color: #7b7977; letter-spacing: 0; }
.center { width: 1417px; display: flex; flex-direction: column; }
.stage { height: 746px; display: flex; background: #3b3a39; }
.report { width: 1166px; font-family: "Liberation Sans", Arial, sans-serif; letter-spacing: 0; background: #3a3a3a; }
.report h1 { height: 50px; background: #000; color: #1268c3; font-size: 29px; line-height: 42px; padding-left: 423px; border-bottom: 1px solid #1d1d1d; }
.board { height: 606px; display: flex; background: #3a3a3a; }
.shade { height: 16px; background: linear-gradient(#747273, #3a3a3a); }
.card { background: #000; border-radius: 25px; box-shadow: inset 0 0 0 1px #0a0a0a; }
.card h2 { color: #e2de26; font-weight: 400; font-size: 17px; line-height: 19.400px; white-space: nowrap; }
.chart { width: 340px; height: 593px; margin-top: 2px; border-radius: 27px; padding: 10px 0 0 13px; }
.legend { display: flex; align-items: center; color: #dedb25; font-size: 12px; white-space: nowrap; }
.legend i { width: 9px; height: 9px; border-radius: 50%; margin-right: 2px; flex: none; margin-top: 2px; }
.chart .legend { height: 20px; margin: 6px 0 0 1px; }
.chart .legend span { margin-right: 6px; }
.chart .legend span:nth-of-type(2) { margin-right: 7px; }
.c1 { background: #71afe2; } .c2 { background: #fdb813; } .c3 { background: #2b79bf; } .c4 { background: #12ad92; } .c5 { background: #0e8370; } .c6 { background: #b09070; } .c7 { background: #c5b07f; } .c8 { background: #f4552b; } .c9 { background: #6c9bd8; }
.plot { display: flex; height: 442px; margin-top: 10px; }
.ytitle { writing-mode: vertical-rl; transform: rotate(180deg); color: #fff; font-size: 14.5px; line-height: 16px; width: 16px; text-align: center; }
.rows { width: 289px; padding: 6px 0 0; display: flex; flex-direction: column; background: repeating-linear-gradient(#4a4a4a 0 1px, transparent 1px 5px) 93px 4px / 1px 438px no-repeat, repeating-linear-gradient(#4a4a4a 0 1px, transparent 1px 5px) 245px 4px / 1px 438px no-repeat; }
.row { height: 18.680px; display: flex; align-items: center; flex: none; }
.row span { width: 85px; margin-right: 8px; text-align: right; font-weight: 700; font-size: 11px; line-height: 15px; color: #dedb25; }
.row b { height: 15px; font-size: 11px; line-height: 15px; text-align: center; color: #f5bd3f; background: #71afe2; flex: none; }
.row b + b { background: #2b79bf; box-shadow: -1px 0 0 #8a8557; }
.row:nth-child(n+6) b + b { box-shadow: none; }
.scroll { width: 8px; background: #757575; margin-left: auto; margin-right: 13px; }
.scroll i { display: block; height: 65px; background: #5c5c5c; border: 1px solid #fff; }
.ticks { display: flex; gap: 123px; margin: 2px 0 0 95px; color: #f2b233; font-size: 11px; font-weight: 700; line-height: 14px; }
.xtitle { color: #fff; font-size: 14.5px; line-height: 18px; margin: 0 0 0 111px; }

.middle { width: 612px; display: flex; flex-direction: column; }
.kpis { height: 344px; display: flex; gap: 1px; padding-left: 1px; }
.kcol { display: flex; flex-direction: column; gap: 1px; }
.k1 { width: 184px; } .k2 { width: 213px; } .k3 { width: 212px; padding-top: 2px; }
.kpi { height: 113px; flex: none; padding-top: 26px; display: flex; flex-direction: column; align-items: center; }
.k1 .tall { height: 115px; padding-top: 27px; }
.k2 .mid { margin-bottom: 2px; padding-top: 25px; }
.k3 .kpi:last-child { height: 114px; }
.kpi strong { font-size: 55.500px; line-height: 56px; letter-spacing: -0.500px; color: #ffc340; }
.kpi span { font-size: 14.500px; line-height: 18px; font-weight: 700; color: #f4502b; }
.mapcard { height: 262px; padding: 9px 14px 0; }
.mlegend { height: 20px; margin: 7px 0 4px; font-size: 12.1px; }
.mlegend strong { margin-right: 8px; }
.mlegend .c1 { margin-right: 7px; }
.mlegend span { margin-right: 7px; }
.mlegend svg { margin-left: -5px; }
.map { width: 584px; height: 189px; background: #abc6f0; position: relative; overflow: hidden; font-family: "Noto Sans", sans-serif; }
.pin { position: absolute; white-space: nowrap; transform: translate(-50%, -50%); }
b.pin { font-size: 11.200px; line-height: 14px; font-weight: 600; color: #1c1c1c; letter-spacing: -0.250px; text-shadow: 0 0 2px #fff; }
span.pin { font-size: 10.300px; line-height: 11px; letter-spacing: 0.600px; color: #5577b5; text-align: center; }
.p1 { left: 162px; top: 20px; } .p2 { left: 322px; top: 25px; } .p3 { left: 426px; top: 16px; } .p4 { left: 324px; top: 94px; }
.p5 { left: 226px; top: 123px; } .p6 { left: 473px; top: 131px; } .map .p7 { left: 0; top: 131px; transform: translateY(-50%); }
.o1 { left: 78px; top: 59px; } .o2 { left: 238px; top: 61px; } .o3 { left: 544px; top: 59px; } .o4 { left: 395px; top: 130px; }
.map .bing { left: 4px; top: 171px; transform: none; display: flex; gap: 3px; color: #666; font-size: 8px; letter-spacing: -0.400px; }
.map .credit { right: 23px; top: 173px; transform: none; font: 8.400px/11px "Liberation Sans", sans-serif; letter-spacing: 0; color: #333; text-shadow: 0 0 2px #fff; }
.credit u { color: #3f62b5; margin-right: 2px; } .credit u:last-child { margin: 0; }

.slicer { width: 214px; margin-top: 2px; background: #fdb714; padding-left: 11px; position: relative; border-left: 1px solid #8f6d1d; }
.slicer h3 { color: #fff; font-size: 15.600px; line-height: 27px; height: 24px; }
.srow { display: flex; align-items: center; height: 26.380px; }
.srow i { width: 15px; height: 15px; border: 1px solid #8d8140; flex: none; }
.srow span { width: 136px; height: 19px; line-height: 19px; margin-left: 6px; background: #3a3a3a; color: #f4502b; font-weight: 700; font-size: 14.500px; white-space: nowrap; }
.srow.top { height: 26px; gap: 7px; }
.srow.top span { width: 154px; margin-left: 0; }
.kids { padding-left: 41px; }
.sthumb { position: absolute; right: 4px; top: 26px; width: 8px; height: 222px; background: rgba(160, 160, 160, .5); }

/* filters */
.filters { width: 251px; background: #3b3a39; color: #fff; border-left: 1px solid #979593; font-size: 14.500px; }
.fhead { height: 50px; display: flex; align-items: center; padding: 0 11px 0 14px; }
.fhead b { font-size: 18px; font-weight: 700; margin-left: 9px; letter-spacing: -0.500px; }
.fhead .eye { margin: 0 20px 0 auto; }
.fsearch { height: 38px; width: 226px; margin: 7px 0 0 9px; border: 1px solid #a19f9d; border-radius: 2px; display: flex; align-items: center; padding: 0 0 1px 13px; gap: 17px; font-size: 15.500px; }
.fline { height: 1px; background: #a19f9d; margin: 5px 0 21px; }
.fsec { display: flex; justify-content: space-between; padding: 0 14px 0 10px; line-height: 20px; letter-spacing: -0.150px; }
.fsec em { font-size: 18px; letter-spacing: 0.500px; }
.fdrop { width: 230px; height: 57px; margin: 11px 0 0 10px; border: 1px solid #c8c6c4; border-radius: 2px; display: flex; align-items: center; justify-content: center; padding-top: 1px; letter-spacing: -0.050px; }
.fsec.two { margin-top: 34px; }

/* page bar */
.pagebar { height: 44px; background: #f3f2f1; display: flex; align-items: center; }
.device { width: 30px; margin-left: 12px; height: 38px; display: flex; justify-content: center; align-items: center; }
.device.on { border-bottom: 3px solid #117865; height: 32px; margin-top: 0; padding-bottom: 4px; }
.phone { margin: -7px 0 0 24px; width: 31px; }
.arr { margin-left: 20px; } .arr + .arr { margin-left: 22px; }
.page { width: 94px; height: 44px; margin-left: 8px; background: #fff; border: solid #a19f9d; border-width: 0 1px; box-shadow: inset 0 -5px #117865; text-align: center; line-height: 45px; font-size: 14.500px; }
.plus { width: 49px; height: 44px; background: #117865; display: flex; align-items: center; justify-content: center; padding-bottom: 4px; }

/* right panels */
.panel { width: 226px; border-left: 1px solid #dddbd9; background: #f3f2f1; }
.phead { height: 50px; display: flex; align-items: center; justify-content: space-between; padding: 0 9px 0 10px; }
.phead b { font-size: 19px; font-weight: 600; letter-spacing: -0.200px; }
.build { line-height: 16px; padding-left: 10px; font-size: 14px; letter-spacing: 0; height: 22px; }
.modes { display: flex; gap: 42px; padding-left: 10px; }
.mode { width: 40px; height: 40px; border-radius: 3px; display: flex; align-items: center; justify-content: center; }
.mode.on { background: #d2d0ce; }
.notch { margin-top: 5px; margin-left: -1px; }
.vgrid { display: grid; grid-template-columns: repeat(6, 35px); grid-auto-rows: 35px; padding: 14px 0 0 14px; height: 294px; border-bottom: 1px solid #d2d0ce; }
.vgrid svg { width: 23px; height: 23px; overflow: visible; }
.vgrid text { letter-spacing: 0; }
.a { fill: none; stroke: #484644; stroke-width: 1.500; }
.w { fill: #fdfdfd; stroke: #484644; stroke-width: 1.400; }
.b { fill: #83bdeb; stroke: #1b6ab3; stroke-width: 1.400; }
.g { fill: #c8c6c4; stroke: #868482; stroke-width: 1.200; }
.bl { fill: none; stroke: #1b75bc; stroke-width: 1.400; }
.z { fill: #fcc26a; stroke: #d9700f; stroke-width: 1.200; }
.values { padding: 12px 7px 0 5px; display: flex; flex-direction: column; letter-spacing: -0.100px; }
.values > span, .values > b, .opt { padding-left: 10px; line-height: 20px; }
.well { height: 35px; margin: 5px 0 14px; background: #fff; border: 1px dashed #c8c6c4; border-radius: 2px; line-height: 34px; padding-left: 12px; white-space: nowrap; font-size: 14.500px; }
.values > b { font-weight: 600; color: #484644; margin-bottom: 8px; letter-spacing: 0; }
.opt { height: 26px; margin-bottom: 8px; display: flex; align-items: center; justify-content: space-between; padding-right: 20px; }
.opt + .opt { margin-bottom: 9px; }
.toggle { width: 40px; height: 20px; border: 1px solid #8a8886; border-radius: 10px; background: #fff; font-size: 11px; line-height: 18px; display: flex; align-items: center; gap: 2px; padding-left: 5px; color: #605e5c; letter-spacing: -0.200px; }
.toggle i { width: 10px; height: 10px; border-radius: 50%; background: #605e5c; }
.toggle.yes { background: #117865; border-color: #117865; color: #fff; gap: 3px; }
.toggle.yes i { background: #fff; }
.drill { height: 32px; line-height: 31px; margin: 0; padding-left: 10px; }

.dsearch { width: 215px; height: 30px; margin: 7px 0 0 5px; background: #fff; border: 1px solid #d2d0ce; border-bottom-color: #605e5c; border-radius: 4px; display: flex; align-items: center; gap: 9px; padding-left: 15px; font-size: 16px; color: #605e5c; }
.table { height: 30px; margin-top: 11px; display: flex; align-items: center; padding: 0 10px 0 17px; gap: 6px; color: #3b3a39; }
.table span { margin-left: 0; }
.table em { margin-left: auto; font-size: 16px; letter-spacing: 0; }
.fields { padding: 0 0 0 55px; color: #3b3a39; letter-spacing: 0; white-space: nowrap; }
.fields div { height: 30px; display: flex; align-items: center; }
.fields i { width: 15px; height: 15px; border: 1px solid #8a8886; border-radius: 2px; margin-right: 10px; }
.fields svg { width: 17px; height: 17px; margin-right: 5.500px; }

/* status bar */
.status { height: 29px; flex: none; border-top: 1px solid #dddbd9; background: #f3f2f1; display: flex; align-items: center; justify-content: space-between; padding: 2px 22px 0 5px; color: #605e5c; letter-spacing: 0.050px; }
.zoom { display: flex; align-items: center; }
.zoom b { font-size: 17px; line-height: 18px; font-weight: 600; }
.slider { width: 125px; height: 14px; margin: 0 6px; background: linear-gradient(#605e5c, #605e5c) 0 50% / 100% 1px no-repeat; display: flex; align-items: center; }
.slider i { width: 5px; height: 13px; background: #605e5c; margin-left: 41px; }
.slider u { width: 1px; height: 7px; background: #605e5c; margin-left: 16px; }
.zoom span { margin: 0 24px 0 17px; letter-spacing: -0.100px; }

/* taskbar */
.taskbar { height: 61px; flex: none; border-top: 1px solid #000; box-shadow: inset 0 1px #454850; background: linear-gradient(90deg, #1d222a 0, #1d222d 290px, #12234f 410px, #131f5c 700px, #1a1c50 850px, #171f4d 960px, #1b2042 1060px, #12224f 1180px, #12224b 1260px, #1b202a 1400px, #1b2027 100%); display: flex; align-items: center; color: #fff; letter-spacing: -0.300px; }
.weather { width: 343px; padding-left: 25px; display: flex; align-items: center; gap: 5px; position: relative; line-height: 20px; font-size: 14.800px; letter-spacing: -0.100px; color: #ccced2; }
.weather b { font-weight: 400; color: #fff; letter-spacing: -0.700px; }
.weather em { position: absolute; left: 46px; top: 1px; font-size: 11px; line-height: 20px; color: #222; }
.tsearch { width: 275px; height: 40px; margin-left: 17px; border-radius: 20px; background: #333f6c; border: 1px solid #4b557d; display: flex; align-items: center; padding: 0 7px 0 14px; gap: 11px; color: #d5d8e4; font-size: 15.500px; letter-spacing: 0; }
.hand { margin-left: auto; }
.apps { display: flex; margin-left: 6px; gap: 7px; }
.app { width: 48px; height: 50px; border-radius: 5px; display: flex; align-items: center; justify-content: center; position: relative; }
.app > svg { width: 32px; height: 30px; }
.run::after, .sel::after { content: ""; position: absolute; bottom: 1px; width: 7px; height: 4px; border-radius: 2px; background: #9196ab; }
.sel { background: #2e3043; border: 1px solid #3c3e50; }
.sel::after { width: 20px; bottom: 0; background: #4cc2ff; }
.ok { position: absolute; right: 4px; top: 5px; width: 17px; height: 17px; border-radius: 50%; background: #13a10e; }
.tray { display: flex; align-items: center; margin-left: auto; padding-right: 25px; height: 50px; line-height: 20px; font-size: 14.500px; }
.up { margin-right: 23px; } .cloud { margin-right: 18px; } .drop { margin-right: 22px; }
.lang { text-align: center; width: 32px; margin-right: 22px; }
.wifi { margin-right: 9px; } .vol { margin-right: 11px; } .bat { margin-right: 17px; }
.clock { text-align: right; width: 82px; margin-right: 11px; white-space: nowrap; font-size: 15px; letter-spacing: -0.150px; }
.bell { margin-right: 22px; }
.cp { position: relative; width: 30px; height: 28px; }
.cp b { position: absolute; left: 7px; bottom: -3px; background: #fbbe18; color: #2a2100; font-size: 9.500px; line-height: 11px; border-radius: 2px; padding: 0 3px; letter-spacing: 0; }
```
